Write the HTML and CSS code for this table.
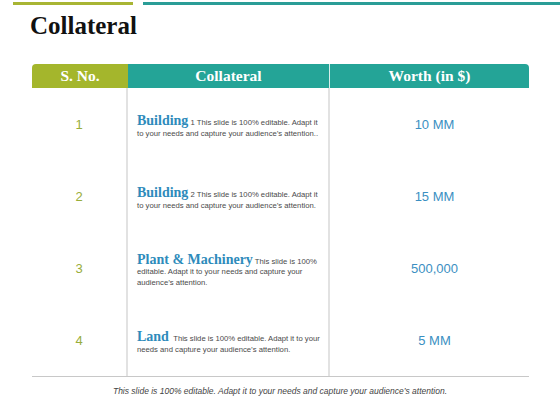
FILE: index.html
```html
<!DOCTYPE html>
<html>
<head>
<meta charset="utf-8">
<link rel="stylesheet" href="styles.css">
</head>
<body>
<div class="slide">
  <div class="topbars"><span class="bar-green"></span><span class="bar-teal"></span></div>
  <h1 class="title">Collateral</h1>
  <div class="table">
    <div class="head">
      <div class="hcell h-sno">S. No.</div>
      <div class="hcell h-col">Collateral</div>
      <div class="hcell h-worth">Worth (in $)</div>
    </div>
    <div class="body">
      <div class="row">
        <div class="cell sno">1</div>
        <div class="cell desc"><p><b class="name">Building</b> 1 This slide is 100% editable. Adapt it to your needs and capture your audience’s attention..</p></div>
        <div class="cell worth">10 MM</div>
      </div>
      <div class="row">
        <div class="cell sno">2</div>
        <div class="cell desc"><p><b class="name">Building</b> 2 This slide is 100% editable. Adapt it to your needs and capture your audience’s attention.</p></div>
        <div class="cell worth">15 MM</div>
      </div>
      <div class="row">
        <div class="cell sno">3</div>
        <div class="cell desc"><p><b class="name">Plant &amp; Machinery</b> This slide is 100% editable. Adapt it to your needs and capture your audience’s attention.</p></div>
        <div class="cell worth">500,000</div>
      </div>
      <div class="row">
        <div class="cell sno">4</div>
        <div class="cell desc"><p><b class="name">Land</b> &nbsp;This slide is 100% editable. Adapt it to your needs and capture your audience’s attention.</p></div>
        <div class="cell worth">5 MM</div>
      </div>
    </div>
  </div>
  <p class="footer">This slide is 100% editable. Adapt it to your needs and capture your audience’s attention.</p>
</div>
</body>
</html>
```
FILE: styles.css
```css
html, body {
  margin: 0;
  padding: 0;
  background: #ffffff;
}
.slide {
  width: 560px;
  height: 420px;
  position: relative;
  overflow: hidden;
  font-family: "Liberation Sans", Arial, sans-serif;
}
.topbars {
  display: flex;
  gap: 10px;
  padding: 2px 0 0 13px;
  height: 3px;
}
.bar-green {
  width: 120px;
  height: 3px;
  background: #a8b534;
}
.bar-teal {
  flex: 1;
  height: 3px;
  background: #2a9d97;
}
.title {
  margin: 6px 0 0 30px;
  font-family: "Liberation Serif", "Times New Roman", serif;
  font-weight: bold;
  font-size: 25px;
  line-height: 30px;
  color: #111111;
}
.table {
  margin: 23px 0 0 32px;
  width: 497px;
}
.head {
  display: grid;
  grid-template-columns: 96px 202px 199px;
  height: 24px;
}
.hcell {
  display: flex;
  align-items: center;
  justify-content: center;
  color: #ffffff;
  font-family: "Liberation Serif", "Times New Roman", serif;
  font-weight: bold;
  font-size: 15.5px;
}
.h-sno {
  background: #a4b62c;
  border-top-left-radius: 4px;
}
.h-col {
  background: #24a497;
  border-right: 1px solid #d9eeeb;
}
.h-worth {
  background: #24a497;
  border-top-right-radius: 4px;
}
.body {
  border-bottom: 1px solid #c8c8c8;
}
.row {
  display: grid;
  grid-template-columns: 96px 202px 199px;
  height: 72px;
}
.cell {
  display: flex;
  align-items: center;
}
.sno {
  justify-content: center;
  color: #98ad3a;
  font-size: 13px;
  border-right: 2px solid #e2e2e2;
}
.desc {
  padding: 6px 5px 0 9px;
  border-right: 2px solid #e2e2e2;
}
.desc p {
  margin: 0;
  font-size: 7.7px;
  line-height: 10.5px;
  color: #4a4a4a;
}
.name {
  font-family: "Liberation Serif", "Times New Roman", serif;
  font-weight: bold;
  font-size: 14px;
  line-height: 12px;
  color: #2e8bbb;
}
.worth {
  justify-content: center;
  padding-left: 10px;
  color: #3b8fc2;
  font-size: 13px;
}
.footer {
  margin: 9px 0 0;
  text-align: center;
  font-style: italic;
  font-size: 8.5px;
  color: #444444;
}
```
